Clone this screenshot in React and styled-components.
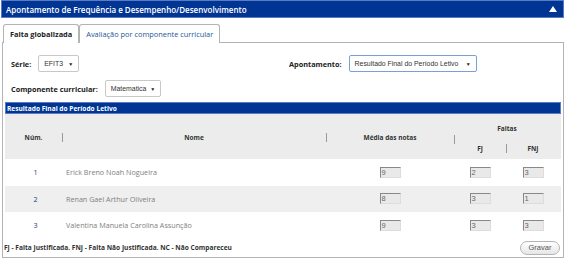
import React from 'react';
import styled, { createGlobalStyle } from 'styled-components';

const GlobalStyle = createGlobalStyle`
body {
    margin: 0;
    background: #fff;
    font-family: "Open Sans", "Liberation Sans", sans-serif;
}
`;

const alunos = [
    { num: 1, nome: "Erick Breno Noah Nogueira", media: "9", fj: "2", fnj: "3" },
    { num: 2, nome: "Renan Gael Arthur Oliveira", media: "8", fj: "3", fnj: "1" },
    { num: 3, nome: "Valentina Manuela Carolina Assunção", media: "9", fj: "3", fnj: "3" },
];

export default function App() {
    return (
        <Wrapper>
            <GlobalStyle />
            <TitleBar>
                <span>Apontamento de Frequência e Desempenho/Desenvolvimento</span>
                <Arrow />
            </TitleBar>
            <Tabs>
                <Tab bold>Falta globalizada</Tab>
                <Tab active>Avaliação por componente curricular</Tab>
            </Tabs>
            <Panel>
                <FilterRow>
                    <Field width={278}>
                        <Label>Série:</Label>
                        <Select width={41}>EFIT3<Caret>▼</Caret></Select>
                    </Field>
                    <Field>
                        <Label>Apontamento:</Label>
                        <Select width={128} focus>Resultado Final do Período Letivo<Caret>▼</Caret></Select>
                    </Field>
                </FilterRow>
                <FilterRow second>
                    <Field>
                        <Label>Componente curricular:</Label>
                        <Select width={56}>Matematica<Caret>▼</Caret></Select>
                    </Field>
                </FilterRow>
                <Section>
                    <SectionTitle>Resultado Final do Período Letivo</SectionTitle>
                    <HeadRow>
                        <HeadCell area="num">Núm.</HeadCell>
                        <HeadCell area="nome" sep>Nome</HeadCell>
                        <HeadCell area="media" sep>Média das notas</HeadCell>
                        <FaltasCell>Faltas</FaltasCell>
                        <SubHead area="fj">FJ</SubHead>
                        <SubHead area="fnj" sep>FNJ</SubHead>
                    </HeadRow>
                    {alunos.map((a, i) => (
                        <Row key={a.num} striped={i % 2 === 1}>
                            <Num>{a.num}</Num>
                            <Name>{a.nome}</Name>
                            <InputCell><Box>{a.media}</Box></InputCell>
                            <InputCell><Box>{a.fj}</Box></InputCell>
                            <InputCell><Box>{a.fnj}</Box></InputCell>
                        </Row>
                    ))}
                </Section>
                <Footer>
                    <Legend>FJ - Falta Justificada. FNJ - Falta Não Justificada. NC - Não Compareceu</Legend>
                    <Button>Gravar</Button>
                </Footer>
            </Panel>
        </Wrapper>
    );
}

const Wrapper = styled.div`
width: 563px;
margin-left: 1px;
`;

const TitleBar = styled.div`
height: 18px;
box-sizing: border-box;
background: #003594;
border: 1px solid #5b7cc4;
color: #fff;
font-size: 8px;
font-weight: 600;
display: flex;
align-items: center;
justify-content: space-between;
padding: 0 6px 0 4px;
`;

const Arrow = styled.span`
width: 0;
height: 0;
border-left: 4px solid transparent;
border-right: 4px solid transparent;
border-bottom: 6px solid #fff;
margin-top: -1px;
`;

const Tabs = styled.div`
display: flex;
margin: 6px 0 0 2px;
height: 18px;
`;

const Tab = styled.div`
box-sizing: border-box;
height: 19px;
border: 1px solid #b3b3b3;
border-bottom: none;
border-radius: 3px 3px 0 0;
background: #fff;
padding: 0 6px;
display: flex;
align-items: center;
font-size: 7.4px;
font-weight: ${p => (p.bold ? 700 : 400)};
color: ${p => (p.active ? "#1d5597" : "#222")};
position: relative;
z-index: 1;
`;

const Panel = styled.div`
margin-left: 1px;
border: 1px solid #b3b3b3;
height: 216px;
box-sizing: border-box;
padding: 0 2px;
`;

const FilterRow = styled.div`
display: flex;
align-items: center;
padding-left: 6px;
margin-top: ${p => (p.second ? "8px" : "12px")};
`;

const Field = styled.div`
display: flex;
align-items: center;
gap: 7px;
width: ${p => (p.width ? `${p.width}px` : "auto")};
`;

const Label = styled.span`
font-size: 7.3px;
font-weight: 700;
color: #222;
`;

const Select = styled.div`
box-sizing: border-box;
width: ${p => p.width}px;
height: 17px;
border: 1px solid ${p => (p.focus ? "#7aa0d6" : "#c8c8c8")};
border-radius: 2px;
background: #fff;
font-family: "Liberation Sans", Arial, sans-serif;
font-size: 6.9px;
color: #333;
display: flex;
align-items: center;
justify-content: space-between;
padding: 0 5px;
white-space: nowrap;
overflow: hidden;
`;

const Caret = styled.span`
font-size: 5px;
margin-left: 4px;
color: #222;
`;

const Section = styled.div`
margin-top: 5px;
`;

const SectionTitle = styled.div`
height: 12px;
box-sizing: border-box;
background: #003594;
border: 1px solid #5b7cc4;
color: #fff;
font-size: 6.6px;
font-weight: 700;
display: flex;
align-items: center;
padding-left: 1px;
`;

const cols = "57px 264px 128px 52px 54px";

const HeadRow = styled.div`
display: grid;
grid-template-columns: ${cols};
grid-template-rows: 23px 22px;
grid-template-areas:
    "num nome media faltas faltas"
    "num nome media fj fnj";
background: #ececec;
`;

const HeadCell = styled.div`
grid-area: ${p => p.area};
display: flex;
align-items: center;
justify-content: center;
font-size: 6.5px;
font-weight: 700;
color: #333;
position: relative;
padding-top: 1px;
&::before {
    content: "";
    display: ${p => (p.sep ? "block" : "none")};
    position: absolute;
    left: 0;
    top: 19px;
    width: 1px;
    height: 9px;
    background: #999;
}
`;

const FaltasCell = styled.div`
grid-area: faltas;
display: flex;
align-items: flex-end;
justify-content: center;
padding-bottom: 4px;
font-size: 6.5px;
font-weight: 700;
color: #333;
position: relative;
&::before {
    content: "";
    position: absolute;
    left: 0;
    top: 21px;
    width: 1px;
    height: 9px;
    background: #999;
}
`;

const SubHead = styled(HeadCell)`
&::before {
    top: 7px;
}
`;

const Row = styled.div`
display: grid;
grid-template-columns: ${cols};
height: 26.5px;
align-items: center;
background: ${p => (p.striped ? "#efefef" : "#fff")};
font-size: 7.2px;
`;

const Num = styled.div`
text-align: center;
color: #173f7a;
padding-left: 4px;
`;

const Name = styled.div`
color: #808080;
padding-left: 4px;
`;

const InputCell = styled.div`
display: flex;
justify-content: center;
`;

const Box = styled.div`
box-sizing: border-box;
width: 21px;
height: 11px;
background: #e9e9e9;
border-top: 1px solid #888;
border-left: 1px solid #888;
border-right: 1px solid #ddd;
border-bottom: 1px solid #ddd;
font-family: "Liberation Sans", Arial, sans-serif;
font-size: 7.5px;
line-height: 9px;
color: #666;
padding-left: 1px;
`;

const Footer = styled.div`
display: flex;
justify-content: space-between;
align-items: center;
margin-top: 2px;
padding-right: 1px;
`;

const Legend = styled.span`
font-size: 6.6px;
font-weight: 700;
color: #333;
margin-left: -1px;
`;

const Button = styled.div`
width: 40px;
height: 14px;
box-sizing: border-box;
border: 1px solid #b5b5b5;
border-radius: 8px;
background: linear-gradient(#ffffff, #e6e6e6);
font-family: "Liberation Sans", Arial, sans-serif;
font-size: 7.5px;
color: #555;
display: flex;
align-items: center;
justify-content: center;
`;
